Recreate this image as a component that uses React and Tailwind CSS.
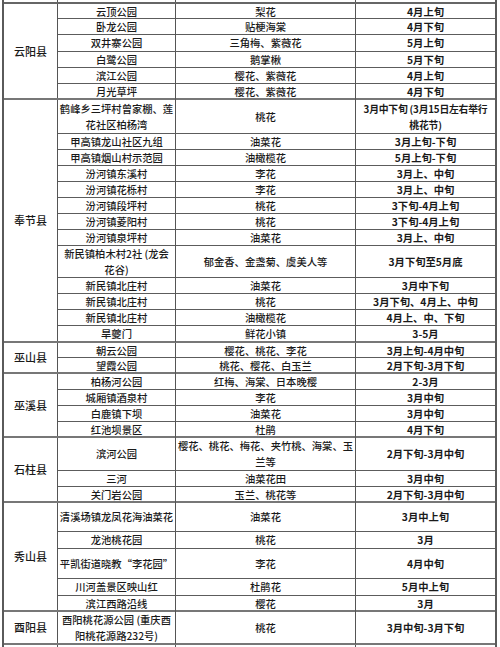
import React from "react";

const groups = [
  {
    county: "云阳县",
    rows: [
      ["云顶公园", "梨花", "4月上旬", "h-[15px]"],
      ["卧龙公园", "贴梗海棠", "4月下旬", "h-[16px]"],
      ["双井寨公园", "三角梅、紫薇花", "5月上旬", "h-[17px]"],
      ["白鹭公园", "鹅掌楸", "5月下旬", "h-[16px]"],
      ["滨江公园", "樱花、紫薇花", "4月上旬", "h-[16px]"],
      ["月光草坪", "樱花、紫薇花", "4月下旬", "h-[14px]"],
    ],
  },
  {
    county: "奉节县",
    rows: [
      ["鹤峰乡三坪村曾家棚、莲\n花社区柏杨湾", "桃花", "3月中下旬 (3月15日左右举行\n桃花节)", "h-[34px]", "text-[9.8px] tracking-[-0.2px]"],
      ["甲高镇龙山社区九组", "油菜花", "3月上旬-下旬", "h-[16px]"],
      ["甲高镇烟山村示范园", "油橄榄花", "5月上旬-下旬", "h-[16px]"],
      ["汾河镇东溪村", "李花", "3月上、中旬", "h-[16px]"],
      ["汾河镇花栎村", "李花", "3月上、中旬", "h-[16px]"],
      ["汾河镇段坪村", "桃花", "3下旬-4月上旬", "h-[16px]"],
      ["汾河镇菱阳村", "桃花", "3下旬-4月上旬", "h-[16px]"],
      ["汾河镇泉坪村", "油菜花", "3月上、中旬", "h-[16px]"],
      ["新民镇柏木村2社 (龙会\n花谷)", "郁金香、金盏菊、虞美人等", "3月下旬至5月底", "h-[32px]"],
      ["新民镇北庄村", "油菜花", "3月中下旬", "h-[16px]"],
      ["新民镇北庄村", "桃花", "3月下旬、4月上、中旬", "h-[16px]"],
      ["新民镇北庄村", "油橄榄花", "4月上、中、下旬", "h-[16px]"],
      ["旱夔门", "鲜花小镇", "3-5月", "h-[15px]"],
    ],
  },
  {
    county: "巫山县",
    rows: [
      ["朝云公园", "樱花、桃花、李花", "3月上旬-4月中旬", "h-[15px]"],
      ["望霞公园", "桃花、樱花、白玉兰", "2月下旬-3月下旬", "h-[14px]"],
    ],
  },
  {
    county: "巫溪县",
    rows: [
      ["柏杨河公园", "红梅、海棠、日本晚樱", "2-3月", "h-[16px]"],
      ["城厢镇酒泉村", "李花", "3月中旬", "h-[16px]"],
      ["白鹿镇下坝", "油菜花", "3月中旬", "h-[16px]"],
      ["红池坝景区", "杜鹃", "4月下旬", "h-[14px]"],
    ],
  },
  {
    county: "石柱县",
    rows: [
      ["滨河公园", "樱花、桃花、梅花、夹竹桃、海棠、玉\n兰等", "2月下旬-3月中旬", "h-[33px]"],
      ["三河", "油菜花田", "3月中旬", "h-[16px]"],
      ["关门岩公园", "玉兰、桃花等", "2月下旬-3月中旬", "h-[14px]"],
    ],
  },
  {
    county: "秀山县",
    rows: [
      ["清溪场镇龙凤花海油菜花", "油菜花", "3月中上旬", "h-[29px]"],
      ["龙池桃花园", "桃花", "3月", "h-[17px]"],
      ["平凯街道晓教“李花园”", "李花", "4月中旬", "h-[30px]"],
      ["川河盖景区映山红", "杜鹃花", "5月中上旬", "h-[17px]"],
      ["滨江西路沿线", "樱花", "3月", "h-[14px]"],
    ],
  },
  {
    county: "酉阳县",
    rows: [["酉阳桃花源公园 (重庆酉\n阳桃花源路232号)", "桃花", "3月中旬-3月下旬", "h-[31px]"]],
  },
];

function Row({ r, last }) {
  return (
    <div
      className={`grid grid-cols-[118px_180px_139px] ${r[3]} ${
        last ? "" : "border-b border-[#5c5c5c]"
      }`}
    >
      <div className="flex items-center justify-center text-center whitespace-pre-line border-r border-[#555] leading-[16px] font-medium text-[10.3px]">
        {r[0]}
      </div>
      <div className="flex items-center justify-center text-center whitespace-pre-line border-r border-[#555] leading-[16px] font-medium text-[10.3px]">
        {r[1]}
      </div>
      <div className={`flex items-center justify-center text-center whitespace-pre-line leading-[16px] font-bold ${r[4] || "text-[10.3px]"}`}>
        {r[2]}
      </div>
    </div>
  );
}

function Partial({ h, top }) {
  return (
    <div className={`flex ${h} ${top ? "border-b-2 border-[#666]" : ""}`}>
      <div className="w-[54px] border-r border-[#555]" />
      <div className="grid grid-cols-[118px_180px_139px]">
        <div className="border-r border-[#555]" />
        <div className="border-r border-[#555]" />
        <div />
      </div>
    </div>
  );
}

export default function App() {
  return (
    <div className="w-[500px] h-[647px] overflow-hidden bg-white text-[#1a1a1a] font-['Noto_Sans_CJK_SC','Noto_Sans',sans-serif]">
      <div className="ml-[2px] w-[495px] border-x-2 border-[#5a5a5a]">
        <Partial h="h-[4px]" top />
        {groups.map((g, gi) => (
          <div key={gi} className="flex border-b-2 border-[#777]">
            <div className="w-[54px] shrink-0 border-r border-[#555] flex items-center justify-center font-medium text-[11px]">
              {g.county}
            </div>
            <div className="flex flex-col">
              {g.rows.map((r, i) => (
                <Row key={i} r={r} last={i === g.rows.length - 1} />
              ))}
            </div>
          </div>
        ))}
        <Partial h="h-[10px]" />
      </div>
    </div>
  );
}
